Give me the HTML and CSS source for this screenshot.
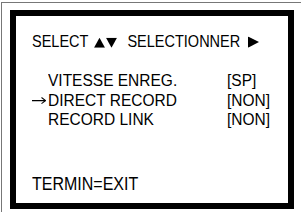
FILE: index.html
```html
<!DOCTYPE html>
<html lang="fr">
<head>
    <meta charset="UTF-8">
    <title>Menu magnétoscope</title>
    <link rel="stylesheet" href="styles.css">
</head>
<body>
    <div class="frame">
        <div class="screen">
            <div class="line title">
                <span class="txt">SELECT</span>
                <svg class="tri-ud" width="23" height="9" viewBox="0 0 23 9">
                    <polygon points="0,9 5.5,0 11,9" />
                    <polygon points="12,0 23,0 17.5,9" />
                </svg>
                <span class="txt">SELECTIONNER</span>
                <svg class="tri-r" width="11" height="10" viewBox="0 0 11 10">
                    <polygon points="0,0 11,5 0,10" />
                </svg>
            </div>
            <div class="menu">
                <div class="line row">
                    <span class="mark"></span>
                    <span class="label">VITESSE ENREG.</span>
                    <span class="value">[SP]</span>
                </div>
                <div class="line row">
                    <span class="mark">
                        <svg class="arrow" width="14" height="7" viewBox="0 0 14 7">
                            <path d="M0 3.5H13M9.5 0.8L13.5 3.5L9.5 6.2" />
                        </svg>
                    </span>
                    <span class="label">DIRECT RECORD</span>
                    <span class="value">[NON]</span>
                </div>
                <div class="line row">
                    <span class="mark"></span>
                    <span class="label">RECORD LINK</span>
                    <span class="value">[NON]</span>
                </div>
            </div>
            <div class="line footer">TERMIN=EXIT</div>
        </div>
    </div>
</body>
</html>
```

FILE: styles.css
```css
* {
    margin: 0;
    padding: 0;
    box-sizing: border-box;
}

body {
    width: 301px;
    height: 212px;
    overflow: hidden;
    background: #fff;
    font-family: "Liberation Sans", Arial, sans-serif;
    font-size: 14.5px;
    color: #000;
}

/* thin outer rule, runs off the right/bottom edge */
.frame {
    margin: 2px 0 0 1px;
    height: 210px;
    padding: 7px 0 0 8px;
    border-top: 1px solid #777;
    border-left: 1px solid #777;
}

.screen {
    width: 284px;
    height: 199px;
    border: 6px solid #000;
    padding: 16px 0 10px 16px;
    display: flex;
    flex-direction: column;
}

.line {
    height: 18px;
    line-height: 18px;
    white-space: nowrap;
    transform: scaleY(1.12);
}

.title {
    display: flex;
    align-items: center;
}

.tri-ud {
    fill: #000;
    margin: 2px 10px 0 6px;
}

.tri-r {
    fill: #000;
    margin: 1px 0 0 8px;
}

.menu {
    margin-top: 20px;
    font-size: 15.5px;
}

.menu .line {
    height: 19.5px;
    line-height: 19.5px;
}

.row {
    display: grid;
    grid-template-columns: 16px 179px auto;
}

.mark {
    display: flex;
    align-items: center;
    padding-top: 1px;
}

.arrow {
    fill: none;
    stroke: #000;
    stroke-width: 1;
}

.footer {
    margin-top: auto;
    font-size: 16px;
}
```
